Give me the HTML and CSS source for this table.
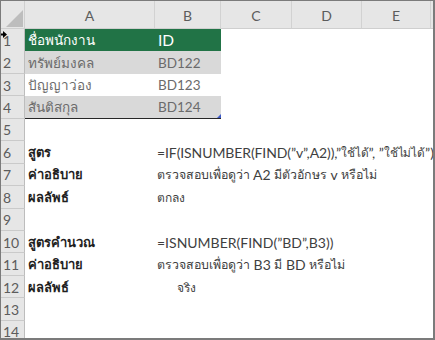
FILE: index.html
```html
<!DOCTYPE html>
<html lang="th">
<head>
<meta charset="utf-8">
<link rel="stylesheet" href="styles.css">
</head>
<body>
<div class="sheet">
  <div class="row head">
    <div class="corner"><svg width="17" height="17" viewBox="0 0 17 17"><polygon points="17,0 17,17 0,17" fill="#bdbdbd"/></svg></div>
    <div class="ch">A</div>
    <div class="ch">B</div>
    <div class="ch">C</div>
    <div class="ch">D</div>
    <div class="ch">E</div>
    <div class="ch end"></div>
  </div>
  <div class="row"><div class="rh">1</div><div class="c a th"><span class="tth">ชื่อพนักงาน</span></div><div class="c b th">ID</div><div class="c rest"></div></div>
  <div class="row"><div class="rh">2</div><div class="c a band">ทรัพย์มงคล</div><div class="c b band">BD122</div><div class="c rest"></div></div>
  <div class="row"><div class="rh">3</div><div class="c a td">ปัญญาว่อง</div><div class="c b td">BD123</div><div class="c rest"></div></div>
  <div class="row"><div class="rh">4</div><div class="c a band last">สันติสกุล</div><div class="c b band last">BD124<span class="handle"></span></div><div class="c rest"></div></div>
  <div class="row"><div class="rh">5</div><div class="c a"></div><div class="c wide"></div></div>
  <div class="row"><div class="rh">6</div><div class="c a lbl">สูตร</div><div class="c wide val tight">=IF(ISNUMBER(FIND(”v”,A2)),”<span class="t2">ใช้ได้</span>”, ”<span class="t2">ใช้ไม่ได้</span>”)</div></div>
  <div class="row"><div class="rh">7</div><div class="c a lbl">ค่าอธิบาย</div><div class="c wide val"><span class="t">ตรวจสอบเพื่อดูว่า</span>&nbsp;A2 <span class="t">มีตัวอักษร</span> v <span class="t">หรือไม่</span></div></div>
  <div class="row"><div class="rh">8</div><div class="c a lbl">ผลลัพธ์</div><div class="c wide val small">ตกลง</div></div>
  <div class="row"><div class="rh">9</div><div class="c a"></div><div class="c wide"></div></div>
  <div class="row"><div class="rh">10</div><div class="c a lbl">สูตรคำนวณ</div><div class="c wide val">=ISNUMBER(FIND(”BD”,B3))</div></div>
  <div class="row"><div class="rh">11</div><div class="c a lbl">ค่าอธิบาย</div><div class="c wide val"><span class="t">ตรวจสอบเพื่อดูว่า</span>&nbsp;B3 <span class="t">มี</span> BD <span class="t">หรือไม่</span></div></div>
  <div class="row"><div class="rh">12</div><div class="c a lbl">ผลลัพธ์</div><div class="c wide val small indent">จริง</div></div>
  <div class="row"><div class="rh">13</div><div class="c a"></div><div class="c wide"></div></div>
  <div class="row"><div class="rh">14</div><div class="c a"></div><div class="c wide"></div></div>
  <svg class="cursor" width="7" height="9" viewBox="0 0 7 9"><polygon points="0,3.5 3,3.5 3,1 7,4.5 3,8 3,5.5 0,5.5" fill="#000"/></svg>
</div>
</body>
</html>
```
FILE: styles.css
```css
html, body {
  margin: 0;
  padding: 0;
  background: #fff;
}
.sheet {
  position: relative;
  width: 435px;
  height: 340px;
  box-sizing: border-box;
  border: 1px solid #7b7b7b;
  border-right-width: 2px;
  border-bottom-width: 2px;
  overflow: hidden;
  font-family: "Lato", "Noto Sans", sans-serif;
  color: #3f3f3f;
}
.row {
  display: grid;
  grid-template-columns: 24px 130px 66px 1fr;
  height: 22.45px;
}
.row.head {
  grid-template-columns: 24px 130px 66px 71px 70px 69px 1fr;
  height: 28px;
}
.corner {
  background: #e6e6e6;
  border-right: 1px solid #cfcfcf;
  border-bottom: 1px solid #cfcfcf;
  box-sizing: border-box;
  display: flex;
  align-items: flex-end;
  justify-content: flex-end;
  padding: 0 1px 1px 0;
}
.ch {
  background: #e6e6e6;
  border-right: 1px solid #d2d2d2;
  border-bottom: 1px solid #cfcfcf;
  box-sizing: border-box;
  display: flex;
  align-items: center;
  justify-content: center;
  font-size: 14px;
  color: #5c5c5c;
  padding-top: 2px;
}
.ch.end {
  border-right: 0;
}
.rh {
  background: #e6e6e6;
  border-right: 1px solid #bdbdbd;
  border-bottom: 1px solid #cacaca;
  box-sizing: border-box;
  font-size: 14px;
  color: #5c5c5c;
  padding-left: 2px;
  display: flex;
  align-items: center;
  padding-top: 1px;
}
.c {
  display: flex;
  align-items: center;
  padding-left: 3px;
  white-space: pre;
  font-size: 13.5px;
  min-width: 0;
  box-sizing: border-box;
}
.wide {
  grid-column: 3 / 5;
  padding-left: 2px;
}
.th {
  background: #217346;
  color: #fff;
  font-size: 15.5px;
  border-bottom: 1px solid #1f1f1f;
}
.tth {
  font-size: 13.5px;
}
.band {
  background: #d9d9d9;
  color: #6b6b6b;
}
.td {
  color: #6b6b6b;
}
.band.last {
  border-bottom: 1px solid #262626;
}
.b {
  position: relative;
}
.handle {
  position: absolute;
  right: 0;
  bottom: 0;
  width: 0;
  height: 0;
  border-left: 4px solid transparent;
  border-bottom: 4px solid #3d59c7;
}
.lbl {
  font-weight: 700;
  color: #1f1f1f;
  font-size: 13px;
}
.val {
  color: #3f3f3f;
  font-size: 14px;
}
.tight {
  letter-spacing: -0.1px;
}
.t {
  font-size: 12.4px;
}
.t2 {
  font-size: 11.8px;
}
.small {
  font-size: 12px;
}
.indent {
  padding-left: 22px;
}
.cursor {
  position: absolute;
  left: -1px;
  top: 29px;
}
```
